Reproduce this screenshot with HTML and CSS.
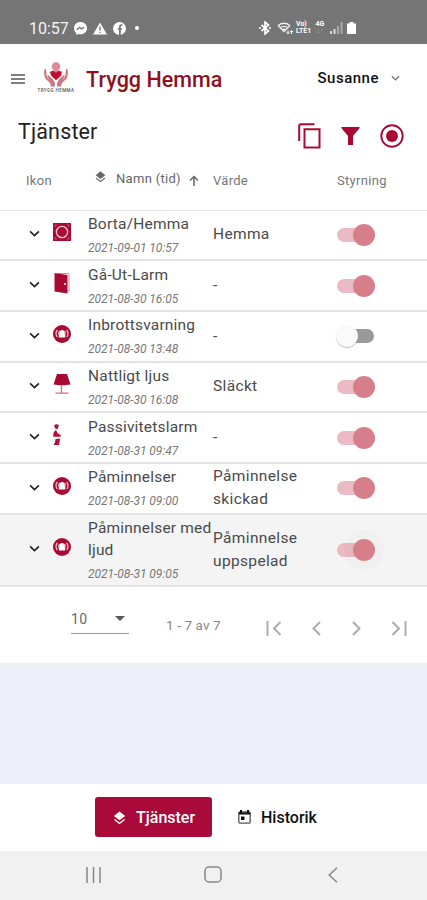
FILE: index.html
```
<!DOCTYPE html>
<html lang="sv">
<head>
<meta charset="UTF-8">
<title>Trygg Hemma</title>
<link rel="stylesheet" href="styles.css">
</head>
<body>

<svg class="defs" width="0" height="0">
<symbol id="chevron" viewBox="0 0 10 6"><path d="M1 1l4 4 4-4" fill="none" stroke="currentColor" stroke-width="1.500"/></symbol>
<symbol id="layers" viewBox="0 0 24 24"><path fill="currentColor" d="M12 16.500l-7.400-5.700L3 9.500l9-7 9 7-1.600 1.300zM12 20l7.400-5.700L21 15.600l-9 7-9-7 1.600-1.300z"/></symbol>
<symbol id="alarm" viewBox="0 0 18 18">
<circle cx="9" cy="9" r="9" fill="#a90a33"/>
<path d="M4.300 4.800Q1.800 8.500 4.300 12M6.400 5.800Q4.800 8.500 6.400 11M13.700 4.800Q16.200 8.500 13.700 12M11.600 5.800Q13.200 8.500 11.600 11" fill="none" stroke="#e7b8c4" stroke-width="1.300"/>
<path d="M9 5a2.600 2.600 0 0 1 2.600 2.600l.6 4.900H5.800l.6-4.900A2.600 2.600 0 0 1 9 5z" fill="#fff"/>
</symbol>
</svg>

<div class="status">
<span class="time">10:57</span>
<svg width="13" height="13" viewBox="0 0 13 13"><path d="M6.500 0C2.800 0 0 2.700 0 6.200c0 2 .8 3.600 2.200 4.700V13l2-1.100c.7.200 1.500.3 2.300.3 3.700 0 6.500-2.600 6.500-6S10.200 0 6.500 0z" fill="#fff"/><path d="M2.800 7.800l2.700-2.500 2 1.500 2.700-1.500" fill="none" stroke="#757575" stroke-width="1.400"/></svg>
<svg width="14" height="13" viewBox="0 0 14 13"><path d="M7 .5L14 12.500H0z" fill="#fff"/><path d="M7 4.500v4M7 9.700v1.400" stroke="#757575" stroke-width="1.400"/></svg>
<svg width="13" height="13" viewBox="0 0 13 13"><circle cx="6.500" cy="6.500" r="6.500" fill="#fff"/><path d="M9.300 3.200H8.200Q6.900 3.200 6.900 4.600V13M4.700 7H9" fill="none" stroke="#757575" stroke-width="1.700"/></svg>
<span class="dot"></span>
<div class="status-right">
<svg width="12" height="14" viewBox="0 0 12 14"><path d="M2.500 4l7 6L6 13V1l3.500 3-7 6M0 7h2M10 7h2" fill="none" stroke="#fff" stroke-width="1.700"/></svg>
<svg class="wifi" width="17" height="13" viewBox="0 0 17 13"><path d="M1 3.500q6-4.500 12 0M3 5.800q4-3 8 0M5 7.800q2-1.300 4 0M1 3.500l6 6 6-6" fill="none" stroke="#eee" stroke-width="1.300"/><path d="M11 12V8.500M14.500 8.500V12M9.500 10.500L11 12l1.500-1.500M13 10l1.500-1.500L16 10" fill="none" stroke="#fff"/></svg>
<span class="tiny volte">Vo)<br>LTE1</span>
<span class="tiny net">4G<br><i>↓↑</i></span>
<svg class="signal" width="13" height="12" viewBox="0 0 13 12"><path d="M1 12V9M4.500 12V7" stroke="#ddd" stroke-width="2"/><path d="M8 12V4M11.500 12V0" stroke="#aaa" stroke-width="2"/></svg>
<svg width="9" height="12" viewBox="0 0 9 12"><path d="M2.500 0h4v1.500H9V12H0V1.500h2.500z" fill="#fff"/></svg>
</div>
</div>

<div class="header">
<svg class="menu" width="14" height="10" viewBox="0 0 14 10"><path d="M0 1h14M0 5h14M0 9h14" stroke="#555" stroke-width="1.500"/></svg>
<div class="logo">
<svg width="26" height="25" viewBox="0 0 26 25">
<circle cx="13" cy="4.500" r="4.300" fill="#d98c95"/>
<path d="M6 10Q13 6 20 10L13 18z" fill="#d98c95"/>
<path d="M13 18Q7.500 14 7.500 11.500T10 9q2 0 3 2 1-2 3-2t2.500 2.500T13 18z" fill="#c00d2c"/>
<path d="M1.500 7Q.2 12 2.300 16.500L7 21l1 3.500h4Q12.500 19 8.500 16L5 13q-1.500.3-.3 2l2.300 3-3-3Q3 11 3 7zM24.500 7q1.300 5-.8 9.500L19 21l-1 3.500h-4Q13.500 19 17.500 16l3.500-3q1.500.3.300 2L19 18l3-3Q23 11 23 7z" fill="#c97780"/>
</svg>
<span>TRYGG HEMMA</span>
</div>
<h1>Trygg Hemma</h1>
<div class="user">Susanne <svg width="9" height="6"><use href="#chevron"/></svg></div>
</div>

<div class="title">
<h2>Tjänster</h2>
<div class="tools">
<svg width="23" height="26" viewBox="0 0 23 26"><path d="M1.200 18V3Q1.200 1.200 3 1.200H16.500M6.500 6.200H21.500V24.500H6.500z" fill="none" stroke="#a90a33" stroke-width="2"/></svg>
<svg class="filter" width="19" height="18" viewBox="0 0 19 18"><path d="M.5 0h18v1.300L12 9v9H7V9L.5 1.300z" fill="#a90a33"/></svg>
<svg width="24" height="24" viewBox="0 0 24 24"><circle cx="12" cy="12" r="10.700" fill="none" stroke="#a90a33" stroke-width="1.900"/><circle cx="12" cy="12" r="6" fill="#a90a33"/></svg>
</div>
</div>

<div class="table">
<div class="row head">
<span class="ikon">Ikon</span>
<div class="namn"><svg class="lay" width="13" height="13"><use href="#layers"/></svg><span>Namn (tid)</span><svg class="arrow" width="10" height="11" viewBox="0 0 10 11"><path d="M5 11V1.500M1 5.500l4-4 4 4" fill="none" stroke="#666" stroke-width="1.500"/></svg></div>
<span>Värde</span>
<span>Styrning</span>
</div>

<div class="row">
<svg class="open" width="11" height="7"><use href="#chevron"/></svg>
<svg class="icon" width="18" height="18" viewBox="0 0 18 18"><path d="M0 0h18v18H0z" fill="#a90a33"/><circle cx="9" cy="9" r="5.600" fill="none" stroke="#f0c8d0" stroke-width="1.400"/><path d="M2 4V2h2M14 2h2v2M16 14v2h-2M4 16H2v-2" fill="none" stroke="#c4506d"/></svg>
<div><div class="name">Borta/Hemma</div><div class="date">2021-09-01 10:57</div></div>
<div class="value">Hemma</div>
<div class="switch on"></div>
</div>

<div class="row">
<svg class="open" width="11" height="7"><use href="#chevron"/></svg>
<svg class="icon" width="18" height="22" viewBox="0 0 18 22"><path d="M5 1.500h11V19h-3" fill="none" stroke="#d98799"/><path d="M1.500 1L14.500 3v18.500L1.500 19.500z" fill="#a90a33"/><circle cx="12" cy="12" r="1" fill="#fff"/></svg>
<div><div class="name">Gå-Ut-Larm</div><div class="date">2021-08-30 16:05</div></div>
<div class="value">-</div>
<div class="switch on"></div>
</div>

<div class="row">
<svg class="open" width="11" height="7"><use href="#chevron"/></svg>
<svg class="icon" width="18" height="18"><use href="#alarm"/></svg>
<div><div class="name">Inbrottsvarning</div><div class="date">2021-08-30 13:48</div></div>
<div class="value">-</div>
<div class="switch"></div>
</div>

<div class="row">
<svg class="open" width="11" height="7"><use href="#chevron"/></svg>
<svg class="icon" width="18" height="20" viewBox="0 0 18 20"><path d="M4 0h10l3.500 10.500Q9 12 .5 10.500z" fill="#a90a33"/><path d="M8.500 11v8M2.500 19.200h13" stroke="#c86f84" stroke-width="1.300"/></svg>
<div><div class="name">Nattligt ljus</div><div class="date">2021-08-30 16:08</div></div>
<div class="value">Släckt</div>
<div class="switch on"></div>
</div>

<div class="row">
<svg class="open" width="11" height="7"><use href="#chevron"/></svg>
<svg class="icon" width="18" height="22" viewBox="0 0 18 22"><path d="M1 1.500q2.500-2.500 5 0L4.500 5h-2zM3 6l1.500 3L8 11.500l-.5 1.300H.3Q-.3 8 3 6zM2.500 15l4.500-.5-.8 6.500H.8q-.3-1.500 1.200-2z" fill="#b80d34"/></svg>
<div><div class="name">Passivitetslarm</div><div class="date">2021-08-31 09:47</div></div>
<div class="value">-</div>
<div class="switch on"></div>
</div>

<div class="row">
<svg class="open" width="11" height="7"><use href="#chevron"/></svg>
<svg class="icon" width="18" height="18"><use href="#alarm"/></svg>
<div><div class="name">Påminnelser</div><div class="date">2021-08-31 09:00</div></div>
<div class="value">Påminnelse<br>skickad</div>
<div class="switch on"></div>
</div>

<div class="row tall">
<svg class="open" width="11" height="7"><use href="#chevron"/></svg>
<svg class="icon" width="18" height="18"><use href="#alarm"/></svg>
<div><div class="name">Påminnelser med<br>ljud</div><div class="date">2021-08-31 09:05</div></div>
<div class="value">Påminnelse<br>uppspelad</div>
<div class="switch on focus"></div>
</div>
</div>

<div class="pager">
<div class="select">10 <svg width="10" height="5" viewBox="0 0 10 5"><path d="M0 0h10L5 5z" fill="#555"/></svg></div>
<span class="range">1 - 7 av 7</span>
<div class="pages">
<svg width="16" height="15" viewBox="0 0 16 15"><path d="M1.500 0v15M14.500 1L8 7.500l6.500 6.500"/></svg>
<svg width="9" height="15" viewBox="0 0 9 15"><path d="M8 1L1.500 7.500 8 14"/></svg>
<svg width="9" height="15" viewBox="0 0 9 15"><path d="M1 1l6.500 6.500L1 14"/></svg>
<svg width="16" height="15" viewBox="0 0 16 15"><path d="M1.500 1L8 7.500 1.500 14M14.500 0v15"/></svg>
</div>
</div>

<div class="space"></div>

<div class="tabs">
<div class="tab active"><svg width="15" height="15"><use href="#layers"/></svg>Tjänster</div>
<div class="tab"><svg width="13" height="14" viewBox="0 0 13 14"><rect x=".8" y="2" width="11.400" height="11.200" rx="1.200" fill="none" stroke="#555" stroke-width="1.300"/><path d="M.8 3.500h11.400M3 0v3M10 0v3" stroke="#111" stroke-width="2"/><path d="M3 6.500h3.500V10H3z" fill="#111"/></svg>Historik</div>
</div>

<div class="android">
<svg width="15" height="16" viewBox="0 0 15 16"><path d="M1 0v16M7.500 0v16M14 0v16" stroke="#888" stroke-width="1.500"/></svg>
<svg class="home" width="18" height="17" viewBox="0 0 18 17"><rect x="1" y="1" width="16" height="15" rx="4" fill="none" stroke="#888" stroke-width="1.500"/></svg>
<svg width="10" height="16" viewBox="0 0 10 16"><path d="M9 .7L1.200 8 9 15.300" fill="none" stroke="#888" stroke-width="1.500"/></svg>
</div>

</body>
</html>
```
FILE: styles.css
```
* { box-sizing:border-box; }
body { margin:0; font-family:Roboto, sans-serif; background:white; color:#4a4a4a; }
svg { flex:none; display:block; }
.defs { position:absolute; }
h1, h2 { margin:0; }

.status {
    height:44px;
    background:#757575;
    color:white;
    display:flex;
    align-items:center;
    padding:12px 71px 0 29px;
    gap:6px;
}
.time { font-size:16px; width:39px; color:#f4f4f4; }
.dot { width:4px; height:4px; border-radius:50%; background:white; margin-left:3px; }
.status-right { display:flex; align-items:center; margin-left:auto; }
.wifi { margin-left:6px; }
.tiny { font-size:7px; line-height:7px; font-weight:700; }
.volte { width:16px; margin-left:2px; }
.net { width:10px; margin-left:3px; text-align:center; }
.net i { font-style:normal; color:#bbb; }
.signal { margin:0 4px 0 5px; }

.header {
    height:68px;
    display:flex;
    align-items:center;
    padding:1px 27px 0 11px;
}
.logo {
    width:38px;
    margin-left:12px;
    display:flex;
    flex-direction:column;
    align-items:center;
    padding-bottom:2px;
}
.logo span { font-size:4.500px; font-weight:500; line-height:7px; letter-spacing:.45px; white-space:nowrap; color:#555; }
h1 { font-size:21.500px; font-weight:500; color:#8f1020; margin:2px 0 0 11px; letter-spacing:.03px; }
.user {
    margin:-2px 0 0 auto;
    display:flex;
    align-items:center;
    gap:12px;
    font-size:15px;
    font-weight:500;
    color:#111;
    letter-spacing:.5px;
}
.user svg { color:#777; }

.title {
    height:48px;
    display:flex;
    align-items:center;
    justify-content:space-between;
    padding:0 23px 8px 18px;
}
h2 { font-size:21.500px; font-weight:400; color:#222; letter-spacing:.15px; margin-top:-1px; }
.tools { display:flex; align-items:center; gap:20px; padding-top:8px; }

.row {
    display:grid;
    grid-template-columns:53px 35px 125px 124px 1fr;
    align-items:center;
    height:50.700px;
    border-bottom:2px solid #e3e3e3;
}
.head {
    height:50.500px;
    grid-template-columns:88px 125px 124px 1fr;
    font-size:13px;
    letter-spacing:.3px;
    color:#777;
    border-bottom-width:1px;
    padding-bottom:9px;
}
.ikon { padding-left:26px; }
.namn { display:flex; align-items:center; padding-left:6px; color:#666; }
.namn span { margin:-3px 8px 0 9px; white-space:nowrap; }
.lay { margin-top:-7px; }
.open { margin-left:29px; margin-top:-2px; color:#222; }
.icon { margin-top:-5px; }
.name { font-size:15.500px; line-height:22px; letter-spacing:.2px; margin-top:-2px; white-space:nowrap; }
.date { font-size:12px; font-style:italic; line-height:14px; margin-top:6px; color:#777; letter-spacing:-.03px; white-space:nowrap; }
.value { font-size:15.500px; line-height:23px; letter-spacing:.35px; }
.tall { height:72px; background:#f4f4f4; }

.switch {
    position:relative;
    width:37px;
    height:14px;
    border-radius:7px;
    background:#999;
}
.switch::after {
    content:"";
    position:absolute;
    left:-1px;
    top:-4px;
    width:22px;
    height:22px;
    border-radius:50%;
    background:#fafafa;
    box-shadow:0 1px 1px rgba(0,0,0,0.25);
}
.on { background:#ebbac4; }
.on::after { left:16px; background:#d67e8a; box-shadow:none; }
.focus::after { box-shadow:0 0 0 9px rgba(0,0,0,0.015); }

.pager { height:76.800px; display:flex; align-items:flex-start; padding:22px 20px 0 71px; color:#888; }
.select {
    width:58px;
    height:25px;
    display:flex;
    justify-content:space-between;
    align-items:center;
    padding:0 4px 4px 0;
    border-bottom:1px solid #999;
    font-size:14px;
    letter-spacing:.3px;
    color:#666;
}
.range { font-size:13.500px; line-height:16px; margin:8px 0 0 37px; letter-spacing:.1px; }
.pages { display:flex; justify-content:space-between; width:141px; margin:12px 0 0 auto; }
.pages path { fill:none; stroke:#aaa; stroke-width:1.900; }

.space { height:121px; background:#edf0f9; }

.tabs { height:67px; display:flex; align-items:center; padding:0 0 1px 95px; }
.tab { display:flex; align-items:center; gap:10px; font-size:16px; font-weight:500; color:#111; margin-left:26px; }
.active {
    width:117px;
    height:40px;
    margin-left:0;
    padding-left:17px;
    gap:9px;
    border-radius:3px;
    background:#a90a3a;
    color:white;
}

.android {
    height:49px;
    background:#f1f1f1;
    display:flex;
    align-items:center;
    justify-content:space-between;
    padding:0 89px 2px 86px;
}
.home { margin-right:4px; }
```
